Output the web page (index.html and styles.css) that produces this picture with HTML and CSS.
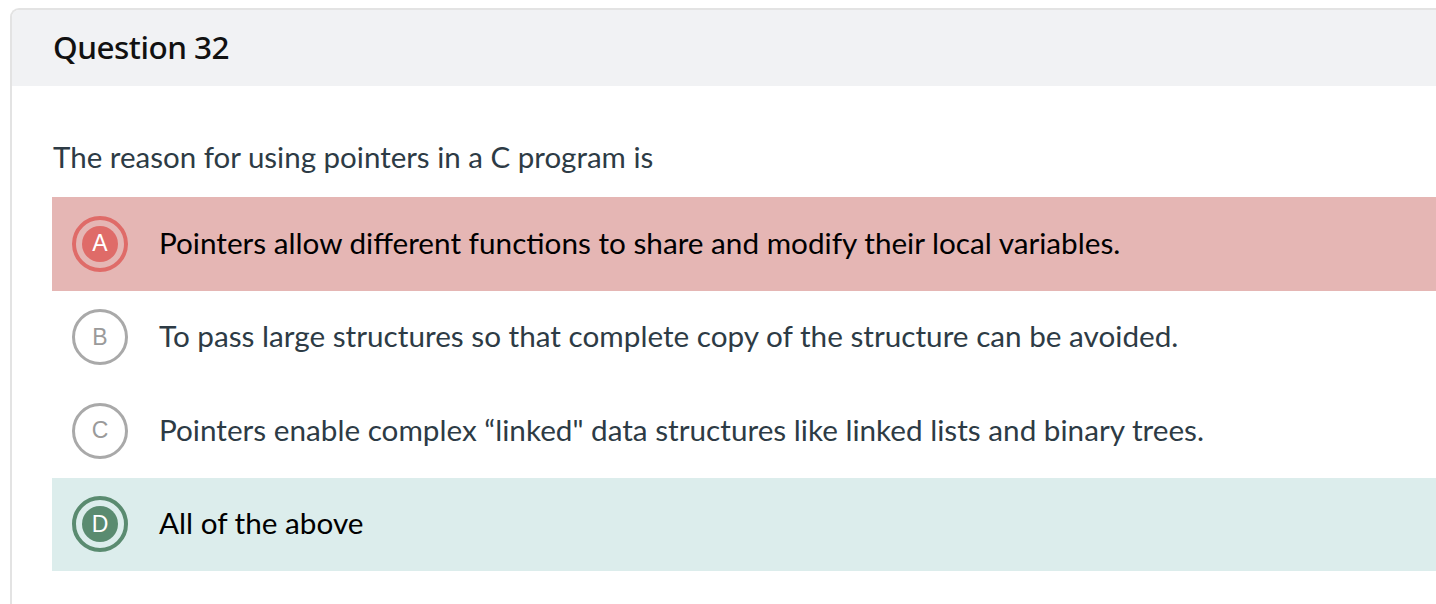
FILE: index.html
```html
<!DOCTYPE html>
<html>
<head>
<meta charset="utf-8">
<link rel="stylesheet" href="styles.css">
</head>
<body>
<div class="card">
  <div class="card-header">
    <h2 class="title">Question 32</h2>
  </div>
  <div class="card-body">
    <p class="question">The reason for using pointers in a C program is</p>
    <div class="options">
      <div class="option wrong">
        <span class="badge"><span class="badge-inner">A</span></span>
        <span class="option-text">Pointers allow different functions to share and modify their local variables.</span>
      </div>
      <div class="option">
        <span class="badge"><span class="badge-inner">B</span></span>
        <span class="option-text">To pass large structures so that complete copy of the structure can be avoided.</span>
      </div>
      <div class="option">
        <span class="badge"><span class="badge-inner">C</span></span>
        <span class="option-text">Pointers enable complex “linked" data structures like linked lists and binary trees.</span>
      </div>
      <div class="option right">
        <span class="badge"><span class="badge-inner">D</span></span>
        <span class="option-text">All of the above</span>
      </div>
    </div>
  </div>
</div>
</body>
</html>
```
FILE: styles.css
```css
html, body {
  margin: 0;
  padding: 0;
  background: #ffffff;
  overflow: hidden;
}
body {
  height: 604px;
  padding: 8px 0 0 10px;
  box-sizing: border-box;
  display: flex;
  flex-direction: column;
}
.card {
  flex: 1;
  border: 2px solid #e3e3e3;
  border-right: none;
  border-bottom: none;
  border-top-left-radius: 9px;
  background: #ffffff;
}
.card-header {
  background: #f1f2f4;
  height: 76px;
  display: flex;
  align-items: center;
  padding-left: 41px;
  border-top-left-radius: 7px;
}
.title {
  margin: 0 0 3px 0;
  font-family: "Noto Sans", sans-serif;
  font-weight: 500;
  font-size: 31.5px;
  color: #111111;
  letter-spacing: -0.5px;
}
.card-body {
  padding: 0 0 0 40px;
}
.question {
  margin: 0;
  padding: 51px 0 0 1px;
  height: 60px;
  font-family: "Lato", sans-serif;
  font-size: 29.5px;
  line-height: 40px;
  color: #2d3b45;
}
.options {
  display: flex;
  flex-direction: column;
}
.option {
  height: 93.5px;
  display: flex;
  align-items: center;
  padding-left: 20px;
  gap: 31px;
  font-family: "Lato", sans-serif;
  font-size: 29.7px;
  color: #2d3b45;
}
.option-text {
  margin-top: -3px;
}
.badge {
  width: 56px;
  height: 56px;
  box-sizing: border-box;
  border-radius: 50%;
  border: 3px solid #a9a9a9;
  display: flex;
  align-items: center;
  justify-content: center;
  flex: none;
}
.badge-inner {
  width: 36px;
  height: 36px;
  border-radius: 50%;
  display: flex;
  align-items: center;
  justify-content: center;
  font-family: "Liberation Sans", Arial, sans-serif;
  font-size: 23px;
  color: #9a9a9a;
}
.wrong {
  background: #e5b6b4;
  color: #000000;
}
.wrong .badge {
  border: 4px solid #df6b68;
}
.wrong .badge-inner {
  background: #df6b68;
  color: #ffffff;
}
.right {
  background: #dcedec;
  color: #000000;
}
.right .badge {
  border: 4px solid #5a8b70;
}
.right .badge-inner {
  background: #5a8b70;
  color: #ffffff;
}
```
